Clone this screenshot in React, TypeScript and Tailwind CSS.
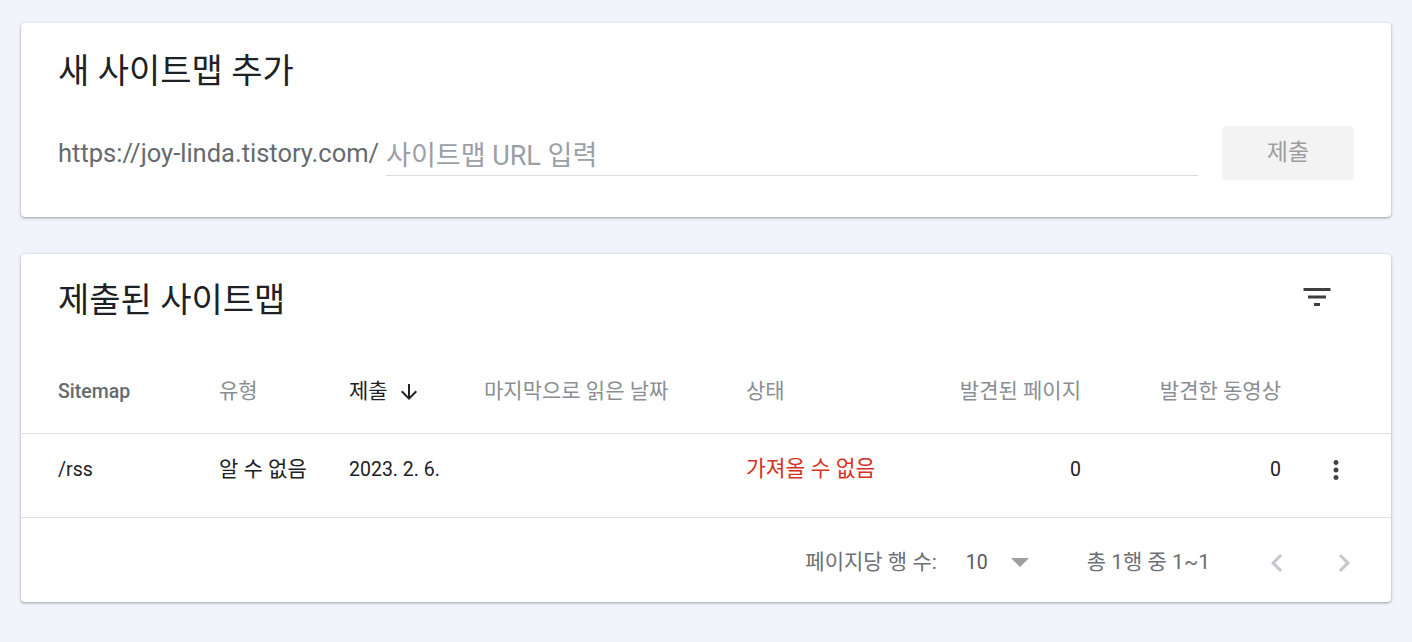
import React from "react";

const FONT = { fontFamily: 'Roboto, "Noto Sans CJK KR", sans-serif' };

function FilterIcon() {
  return (
    <svg width="36" height="36" viewBox="0 0 24 24" fill="#3c4043">
      <path d="M10 18h4v-2h-4v2zM3 6v2h18V6H3zm3 7h12v-2H6v2z" />
    </svg>
  );
}

function MoreVert() {
  return (
    <svg width="30" height="30" viewBox="0 0 24 24" fill="#3c4043">
      <path d="M12 8c1.1 0 2-.9 2-2s-.9-2-2-2-2 .9-2 2 .9 2 2 2zm0 2c-1.1 0-2 .9-2 2s.9 2 2 2 2-.9 2-2-.9-2-2-2zm0 6c-1.1 0-2 .9-2 2s.9 2 2 2 2-.9 2-2-.9-2-2-2z" />
    </svg>
  );
}

function ArrowDown() {
  return (
    <svg width="24" height="24" viewBox="0 0 24 24" fill="#202124">
      <path d="M20 12l-1.41-1.41L13 16.17V4h-2v12.17l-5.58-5.59L4 12l8 8 8-8z" />
    </svg>
  );
}

function ChevronLeft() {
  return (
    <svg width="36" height="36" viewBox="0 0 24 24" fill="#c4c7cc">
      <path d="M15.41 7.41L14 6l-6 6 6 6 1.41-1.41L10.83 12z" />
    </svg>
  );
}

function ChevronRight() {
  return (
    <svg width="36" height="36" viewBox="0 0 24 24" fill="#c4c7cc">
      <path d="M10 6L8.59 7.41 13.17 12l-4.58 4.59L10 18l6-6z" />
    </svg>
  );
}

function DropTriangle() {
  return (
    <svg width="18" height="10" viewBox="0 0 18 10" fill="#9e9e9e">
      <polygon points="0,0 18,0 9,9" />
    </svg>
  );
}

const card =
  "bg-white rounded-[4px] shadow-[0_1px_2px_rgba(60,64,67,0.3),0_1px_3px_1px_rgba(60,64,67,0.15)]";

const grid = "grid grid-cols-[161px_130px_135px_262px_200px_135px_200px_1fr] pl-[37px]";

export default function App() {
  return (
    <div className="min-h-[642px] w-full bg-[#f1f4fb] px-[21px] pt-[23px] pb-[40px]" style={FONT}>
      <div className="flex flex-col gap-[37px]">
        {/* Card 1 */}
        <div className={`${card} px-[37px] pt-[27px] pb-[37px]`}>
          <div className="text-[34px] leading-[42px] text-[#202124]">새 사이트맵 추가</div>
          <div className="mt-[34px] flex items-center">
            <div className="flex h-[54px] flex-1 items-center">
              <span className="text-[25.5px] leading-[30px] text-[#666a6e]">https://joy-linda.tistory.com/</span>
              <div className="ml-[7px] mt-[6px] flex h-[40px] flex-1 items-center border-b border-[#dadce0]">
                <span className="text-[27px] leading-[30px] text-[#9aa0a6]">사이트맵 URL 입력</span>
              </div>
            </div>
            <div className="ml-[24px] flex h-[54px] w-[132px] items-center justify-center rounded-[4px] bg-[#f3f3f3] text-[23px] text-[#9e9e9e]">
              제출
            </div>
          </div>
        </div>

        {/* Card 2 */}
        <div className={`${card}`}>
          <div className="flex items-center justify-between pl-[37px] pr-[56px] pt-[25px] pb-[27px]">
            <div className="text-[34px] leading-[42px] text-[#202124]">제출된 사이트맵</div>
            <span className="-mt-[6px] flex"><FilterIcon /></span>
          </div>

          {/* header */}
          <div className={`${grid} h-[86px] items-center border-b border-[#e0e0e0] pt-[3px] text-[21px]`}>
            <div className="text-[19.5px] font-medium text-[#666a6e]">Sitemap</div>
            <div className="text-[#8a8e93]">유형</div>
            <div className="flex items-center text-[#202124]">
              <span>제출</span>
              <span className="ml-[9px] flex items-center"><ArrowDown /></span>
            </div>
            <div className="text-[#8a8e93]">마지막으로 읽은 날짜</div>
            <div className="text-[#8a8e93]">상태</div>
            <div className="text-right text-[#8a8e93]">발견된 페이지</div>
            <div className="text-right text-[#8a8e93]">발견한 동영상</div>
            <div />
          </div>

          {/* row */}
          <div className={`${grid} h-[84px] items-center border-b border-[#e0e0e0] pb-[12px] text-[19.5px] text-[#202124]`}>
            <div>/rss</div>
            <div className="text-[21px]">알 수 없음</div>
            <div>2023. 2. 6.</div>
            <div />
            <div className="text-[21.5px] text-[#d93025]">가져올 수 없음</div>
            <div className="text-right">0</div>
            <div className="text-right">0</div>
            <div className="flex justify-center">
              <MoreVert />
            </div>
          </div>

          {/* footer */}
          <div className="flex h-[84px] items-center justify-end pt-[5px] pr-[29px] text-[21px] text-[#6b6f74]">
            <span>페이지당 행 수:</span>
            <span className="ml-[29px] text-[19.5px] text-[#55595e]">10</span>
            <span className="ml-[23px] flex items-center"><DropTriangle /></span>
            <span className="ml-[58px]">총 1행 중 1~1</span>
            <span className="ml-[49px] flex items-center"><ChevronLeft /></span>
            <span className="ml-[31px] flex items-center"><ChevronRight /></span>
          </div>
        </div>
      </div>
    </div>
  );
}
